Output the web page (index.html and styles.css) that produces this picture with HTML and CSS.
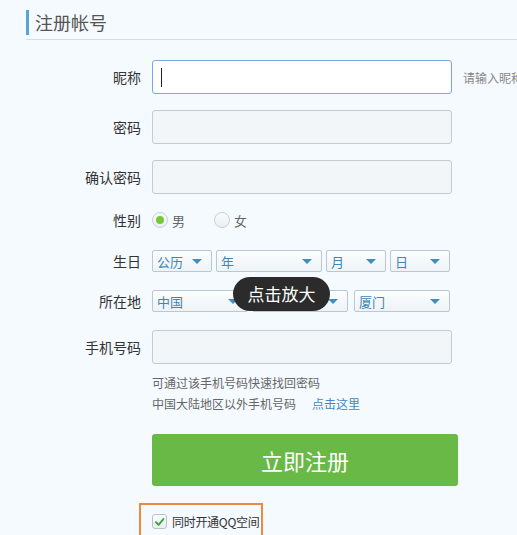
FILE: index.html
```html
<!DOCTYPE html>
<html lang="zh-CN">
<head>
<meta charset="utf-8">
<title>注册帐号</title>
<link rel="stylesheet" href="styles.css">
</head>
<body>
<div class="page">
  <div class="head">
    <h1 class="title">注册帐号</h1>
  </div>
  <div class="form">
    <div class="row row-input">
      <label class="lbl">昵称</label>
      <div class="field focus"><span class="caret"></span></div>
      <span class="tip">请输入昵称</span>
    </div>
    <div class="row row-input">
      <label class="lbl">密码</label>
      <div class="field"></div>
    </div>
    <div class="row row-input">
      <label class="lbl">确认密码</label>
      <div class="field"></div>
    </div>
    <div class="row row-gender">
      <label class="lbl">性别</label>
      <div class="radios">
        <span class="radio on"></span><span class="rtext">男</span>
        <span class="radio"></span><span class="rtext">女</span>
      </div>
    </div>
    <div class="row row-sel row-birth">
      <label class="lbl">生日</label>
      <div class="sels">
        <div class="sel w60"><span>公历</span><i class="arr"></i></div>
        <div class="sel w106"><span>年</span><i class="arr"></i></div>
        <div class="sel w60"><span>月</span><i class="arr"></i></div>
        <div class="sel w60"><span>日</span><i class="arr"></i></div>
      </div>
    </div>
    <div class="row row-sel row-loc">
      <label class="lbl">所在地</label>
      <div class="sels">
        <div class="sel w96"><span>中国</span><i class="arr"></i></div>
        <div class="sel w96"><span>福建</span><i class="arr"></i></div>
        <div class="sel w96 last"><span>厦门</span><i class="arr"></i></div>
      </div>
      <div class="zoomtip">点击放大</div>
    </div>
    <div class="row row-input row-phone">
      <label class="lbl">手机号码</label>
      <div class="field"></div>
    </div>
    <div class="hints">
      <p>可通过该手机号码快速找回密码</p>
      <p>中国大陆地区以外手机号码<a class="link" href="#">点击这里</a></p>
    </div>
    <div class="btnrow">
      <button class="submit" type="button">立即注册</button>
    </div>
    <div class="agree">
      <span class="chk"><svg viewBox="0 0 14 14" width="14" height="14"><path d="M3 7.2 L6 10 L11.2 3.8" fill="none" stroke="#3aa63a" stroke-width="2" stroke-linecap="round" stroke-linejoin="round"/></svg></span>
      <span class="agtext">同时开通QQ空间</span>
    </div>
  </div>
</div>
</body>
</html>
```

FILE: styles.css
```css
* { box-sizing: border-box; }
html, body {
  margin: 0;
  padding: 0;
  background: #f5faff;
  font-family: "Noto Sans CJK SC", "Noto Sans", "Liberation Sans", sans-serif;
  color: #333;
  overflow: hidden;
}
.page {
  width: 517px;
  height: 535px;
  position: relative;
}
.head {
  margin-left: 26px;
  padding-top: 10px;
  border-bottom: 1px solid #d6dde3;
  padding-bottom: 4px;
}
.title {
  margin: 0;
  height: 25px;
  line-height: 24px;
  border-left: 3px solid #56a4d8;
  padding-left: 6px;
  font-size: 18px;
  font-weight: normal;
  color: #555;
}
.form {
  padding-top: 20px;
}
.row {
  display: flex;
  align-items: center;
  position: relative;
}
.lbl {
  width: 141px;
  text-align: right;
  font-size: 14px;
  color: #333;
  margin-right: 11px;
  flex: none;
}
.row-input {
  height: 34px;
  margin-bottom: 16px;
}
.field {
  flex: none;
  width: 300px;
  height: 34px;
  border: 1px solid #c3cbd2;
  border-radius: 3px;
  background: #f2f6f9;
  display: flex;
  align-items: center;
}
.field.focus {
  border-color: #7ea8e2;
  background: #fff;
  box-shadow: inset 0 0 1px rgba(100,150,220,0.4);
}
.caret {
  display: block;
  width: 1px;
  height: 19px;
  background: #222;
  margin-left: 8px;
}
.tip {
  margin-left: 11px;
  font-size: 12px;
  color: #888;
  white-space: nowrap;
}
.row-gender {
  height: 20px;
  margin-bottom: 20px;
}
.radios {
  display: flex;
  align-items: center;
}
.radio {
  width: 16px;
  height: 16px;
  border-radius: 50%;
  border: 1px solid #c9d0d6;
  background: linear-gradient(#fafcfd, #eaeff3);
  display: flex;
  align-items: center;
  justify-content: center;
}
.radio.on::after {
  content: "";
  width: 8px;
  height: 8px;
  border-radius: 50%;
  background: #74c936;
}
.rtext {
  font-size: 13px;
  color: #666;
  margin-left: 4px;
  margin-right: 29px;
}
.row-sel {
  height: 22px;
}
.row-birth { margin-bottom: 18px; }
.row-loc { margin-bottom: 18px; }
.sels {
  display: flex;
}
.sel {
  flex: none;
  height: 22px;
  border: 1px solid #b9c8d4;
  border-radius: 2px;
  background: linear-gradient(#fbfdfe, #eef3f7);
  display: flex;
  align-items: center;
  justify-content: space-between;
  padding: 0 9px 0 4px;
  margin-right: 4px;
  font-size: 13px;
  color: #3d86b6;
}
.sel.last { margin-left: 2px; }
.w60 { width: 60px; }
.w96 { width: 96px; }
.w106 { width: 106px; }
.arr {
  width: 0;
  height: 0;
  border-left: 5px solid transparent;
  border-right: 5px solid transparent;
  border-top: 5px solid #3f8cbf;
}
.zoomtip {
  position: absolute;
  left: 233px;
  top: -13px;
  width: 97px;
  height: 34px;
  border-radius: 17px;
  background: #2b2b2b;
  color: #fff;
  font-size: 17px;
  line-height: 34px;
  text-align: center;
}
.row-phone {
  margin-bottom: 8px;
}
.hints {
  margin-left: 152px;
  font-size: 12px;
  color: #666;
}
.hints p {
  margin: 0;
  line-height: 21px;
}
.link {
  color: #3d8ac6;
  text-decoration: none;
  margin-left: 16px;
}
.btnrow {
  margin-top: 20px;
  margin-left: 152px;
}
.submit {
  display: block;
  width: 306px;
  height: 52px;
  border: none;
  border-radius: 3px;
  background: #69b946;
  color: #fff;
  font-family: inherit;
  font-size: 22px;
  padding: 0;
}
.agree {
  margin-top: 17px;
  margin-left: 139px;
  width: 124px;
  height: 40px;
  border: 2px solid #ee8a3c;
  border-bottom: none;
  display: flex;
  align-items: flex-start;
  padding: 9px 0 0 11px;
}
.chk {
  width: 15px;
  height: 15px;
  border: 1px solid #b8c2cc;
  border-radius: 3px;
  background: linear-gradient(#fdfefe, #e9eef2);
  display: flex;
  align-items: center;
  justify-content: center;
  flex: none;
}
.chk svg { display: block; }
.agtext {
  margin-left: 5px;
  font-size: 12px;
  line-height: 15px;
  color: #333;
  white-space: nowrap;
  letter-spacing: -0.3px;
}
```
